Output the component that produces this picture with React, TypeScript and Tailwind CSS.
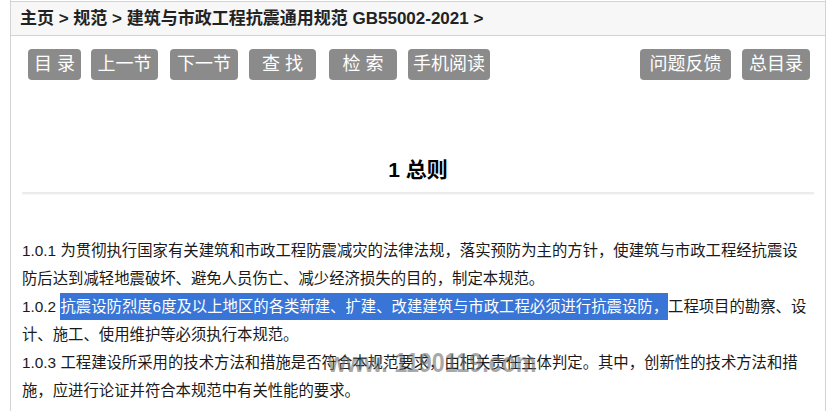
import React from "react";

const font = { fontFamily: '"Liberation Sans", "Noto Sans CJK SC", sans-serif' };

const leftButtons: { label: string; cls: string }[] = [
  { label: "目 录", cls: "w-[53px]" },
  { label: "上一节", cls: "w-[67px] ml-[10px]" },
  { label: "下一节", cls: "w-[68px] ml-[12px]" },
  { label: "查 找", cls: "w-[67px] ml-[11px]" },
  { label: "检 索", cls: "w-[68px] ml-[13px]" },
  { label: "手机阅读", cls: "w-[82px] ml-[11px]" },
];

const rightButtons: { label: string; cls: string }[] = [
  { label: "问题反馈", cls: "w-[91px]" },
  { label: "总目录", cls: "w-[68px] ml-[11px]" },
];

function Btn({ label, cls }: { label: string; cls: string }) {
  return (
    <div
      className={`${cls} h-[31px] rounded-[4px] bg-[#8b8b8b] text-white text-[18px] leading-[31px] text-center whitespace-pre`}
    >
      {label}
    </div>
  );
}

export default function App() {
  return (
    <div className="w-[830px] h-[411px] bg-white overflow-hidden relative" style={font}>
      <div className="ml-[10px] w-[816px] h-[420px] border-x border-[#d3d3d3] pt-[1px]">
        <div className="h-[35px] border-y border-[#d3d3d3] bg-[#f7f7f7] pl-[9px] text-[17px] font-bold leading-[34px] text-[#222] whitespace-nowrap">
          主页 &gt; 规范 &gt; 建筑与市政工程抗震通用规范 GB55002-2021 &gt;
        </div>

        <div className="mt-[13px] flex justify-between pl-[17px] pr-[15px]">
          <div className="flex">
            {leftButtons.map((b) => (
              <Btn key={b.label} {...b} />
            ))}
          </div>
          <div className="flex">
            {rightButtons.map((b) => (
              <Btn key={b.label} {...b} />
            ))}
          </div>
        </div>

        <div className="px-[11px]">
          <div className="mt-[75px] text-center text-[21px] font-bold leading-[30px] text-black">
            1 总则
          </div>
          <div className="mt-[7px] h-[2px] bg-[#ececec]" />
          <div className="h-[1px] bg-[#f8f8f8]" />

          <div className="mt-[42px] w-[788px] text-[15.36px] leading-[28px] text-[#1a1a1a]">
            <p>
              1.0.1 为贯彻执行国家有关建筑和市政工程防震减灾的法律法规，落实预防为主的方针，使建筑与市政工程经抗震设防后达到减轻地震破坏、避免人员伤亡、减少经济损失的目的，制定本规范。
            </p>
            <p>
              1.0.2{" "}
              <span className="bg-[#3875d7] text-white py-[5px]">
                抗震设防烈度6度及以上地区的各类新建、扩建、改建建筑与市政工程必须进行抗震设防，
              </span>
              工程项目的勘察、设计、施工、使用维护等必须执行本规范。
            </p>
            <p>
              1.0.3 工程建设所采用的技术方法和措施是否符合本规范要求，由相关责任主体判定。其中，创新性的技术方法和措施，应进行论证并符合本规范中有关性能的要求。
            </p>
          </div>
        </div>
      </div>

      <div
        className="absolute left-[328px] top-[348px] text-[28px] font-bold leading-[30px] text-[#6f6f6f] opacity-60 origin-left scale-x-[0.83] whitespace-nowrap pointer-events-none"
        style={font}
      >
        www. 1190119.com
      </div>
    </div>
  );
}
